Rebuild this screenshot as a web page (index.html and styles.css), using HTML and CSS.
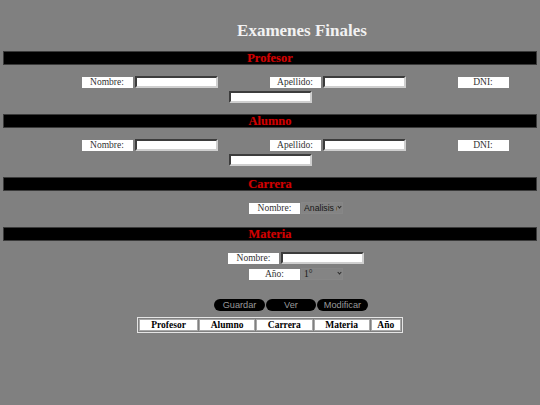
FILE: index.html
```html
<!DOCTYPE html>
<html lang="es">
<head>
<meta charset="utf-8">
<title>Examenes Finales</title>
<link rel="stylesheet" href="styles.css">
</head>
<body>
<div class="page">
  <h1 class="title">Examenes Finales</h1>

  <section class="sec">
    <h2 class="bar">Profesor</h2>
    <div class="fields">
      <span class="lbl">Nombre:</span><input class="txt" type="text">
      <span class="lbl">Apellido:</span><input class="txt" type="text">
      <span class="lbl">DNI:</span><input class="txt" type="text">
    </div>
  </section>

  <section class="sec">
    <h2 class="bar">Alumno</h2>
    <div class="fields">
      <span class="lbl">Nombre:</span><input class="txt" type="text">
      <span class="lbl">Apellido:</span><input class="txt" type="text">
      <span class="lbl">DNI:</span><input class="txt" type="text">
    </div>
  </section>

  <section class="sec">
    <h2 class="bar">Carrera</h2>
    <div class="fields">
      <span class="lbl">Nombre:</span><span class="selwrap"><select class="sel"><option>Analisis de Sistemas</option></select></span>
    </div>
  </section>

  <section class="sec sec-materia">
    <h2 class="bar">Materia</h2>
    <div class="fields">
      <span class="lbl">Nombre:</span><input class="txt" type="text">
    </div>
    <div class="fields fields-next">
      <span class="lbl">Año:</span><span class="selwrap"><select class="sel sel-serif"><option>1°</option><option>2°</option><option>3°</option></select></span>
    </div>
  </section>

  <div class="actions">
    <button class="btn" type="button">Guardar</button>
    <button class="btn btn-narrow" type="button">Ver</button>
    <button class="btn" type="button">Modificar</button>
  </div>

  <table class="grid">
    <tr>
      <th>Profesor</th>
      <th>Alumno</th>
      <th>Carrera</th>
      <th>Materia</th>
      <th>Año</th>
    </tr>
  </table>
</div>
</body>
</html>
```

FILE: styles.css
```css
html, body {
  margin: 0;
  padding: 0;
  background: #808080;
}

body {
  font-family: "Liberation Serif", "Times New Roman", serif;
  width: 540px;
  height: 405px;
  overflow: hidden;
}

.page {
  padding: 0 3px;
}

.title {
  margin: 0;
  padding-top: 21px;
  padding-left: 64px;
  font-size: 17px;
  line-height: 20px;
  font-weight: bold;
  text-align: center;
  color: #f2f2f2;
}

.sec {
  margin-top: 11px;
}

.title + .sec {
  margin-top: 10px;
}

.sec-materia {
  margin-top: 13px;
}

.bar {
  margin: 0;
  height: 12px;
  line-height: 12px;
  border: 1px solid #3a3a3a;
  background: #000;
  color: #d00000;
  font-size: 12.5px;
  font-weight: bold;
  text-align: center;
  text-shadow: 0 0 1px #500;
}

.fields {
  margin-top: 11px;
  display: flex;
  flex-wrap: wrap;
  justify-content: center;
  align-items: center;
  row-gap: 3px;
}

.fields-next {
  margin-top: 4px;
}

.lbl {
  box-sizing: border-box;
  width: 51px;
  height: 11px;
  margin-left: 52px;
  margin-right: 2px;
  background: #fff;
  color: #333;
  font-size: 9.5px;
  line-height: 11px;
  text-align: center;
}

.txt {
  box-sizing: border-box;
  width: 83px;
  height: 12px;
  margin: 0;
  padding: 0;
  background: #fff;
  border-style: solid;
  border-width: 2px;
  border-color: #3c3c3c #cfcfcf #cfcfcf #3c3c3c;
  font-size: 9px;
}

.selwrap {
  position: relative;
  display: inline-block;
  width: 42px;
  height: 12px;
  margin-left: -1px;
}

.selwrap::after {
  content: "";
  position: absolute;
  right: 2px;
  top: 3px;
  width: 2px;
  height: 2px;
  border-right: 1px solid #2a2a2a;
  border-bottom: 1px solid #2a2a2a;
  transform: rotate(45deg);
  pointer-events: none;
}

.sel {
  -webkit-appearance: none;
  appearance: none;
  box-sizing: border-box;
  display: block;
  width: 42px;
  height: 12px;
  margin: 0;
  padding: 0 5px 0 2px;
  border: 1px solid #878787;
  border-radius: 0;
  background-color: #848484;
  color: #161616;
  font-family: "Liberation Sans", Arial, sans-serif;
  font-size: 8.7px;
  line-height: 10px;
  overflow: hidden;
  white-space: nowrap;
}

.sel-serif {
  font-family: "Liberation Serif", "Times New Roman", serif;
  font-size: 9.5px;
}

.actions {
  margin-top: 19px;
  padding-left: 42px;
  display: flex;
  justify-content: center;
  gap: 1px;
}

.btn {
  box-sizing: border-box;
  width: 51px;
  height: 12px;
  margin: 0;
  padding: 0;
  border: none;
  border-radius: 6px;
  background: #000;
  color: #9a9a9a;
  font-family: "Liberation Sans", Arial, sans-serif;
  font-size: 9.2px;
  line-height: 12px;
}

.btn-narrow {
  width: 50px;
}

.grid {
  margin: 6px auto 0;
  width: 266px;
  border: 1px solid #e4e4e4;
  border-spacing: 1px;
}

.grid th {
  padding: 0;
  border: 1px solid #a8a8a8;
  background: #fff;
  color: #000;
  font-size: 9.5px;
  line-height: 10px;
  font-weight: bold;
}
```
